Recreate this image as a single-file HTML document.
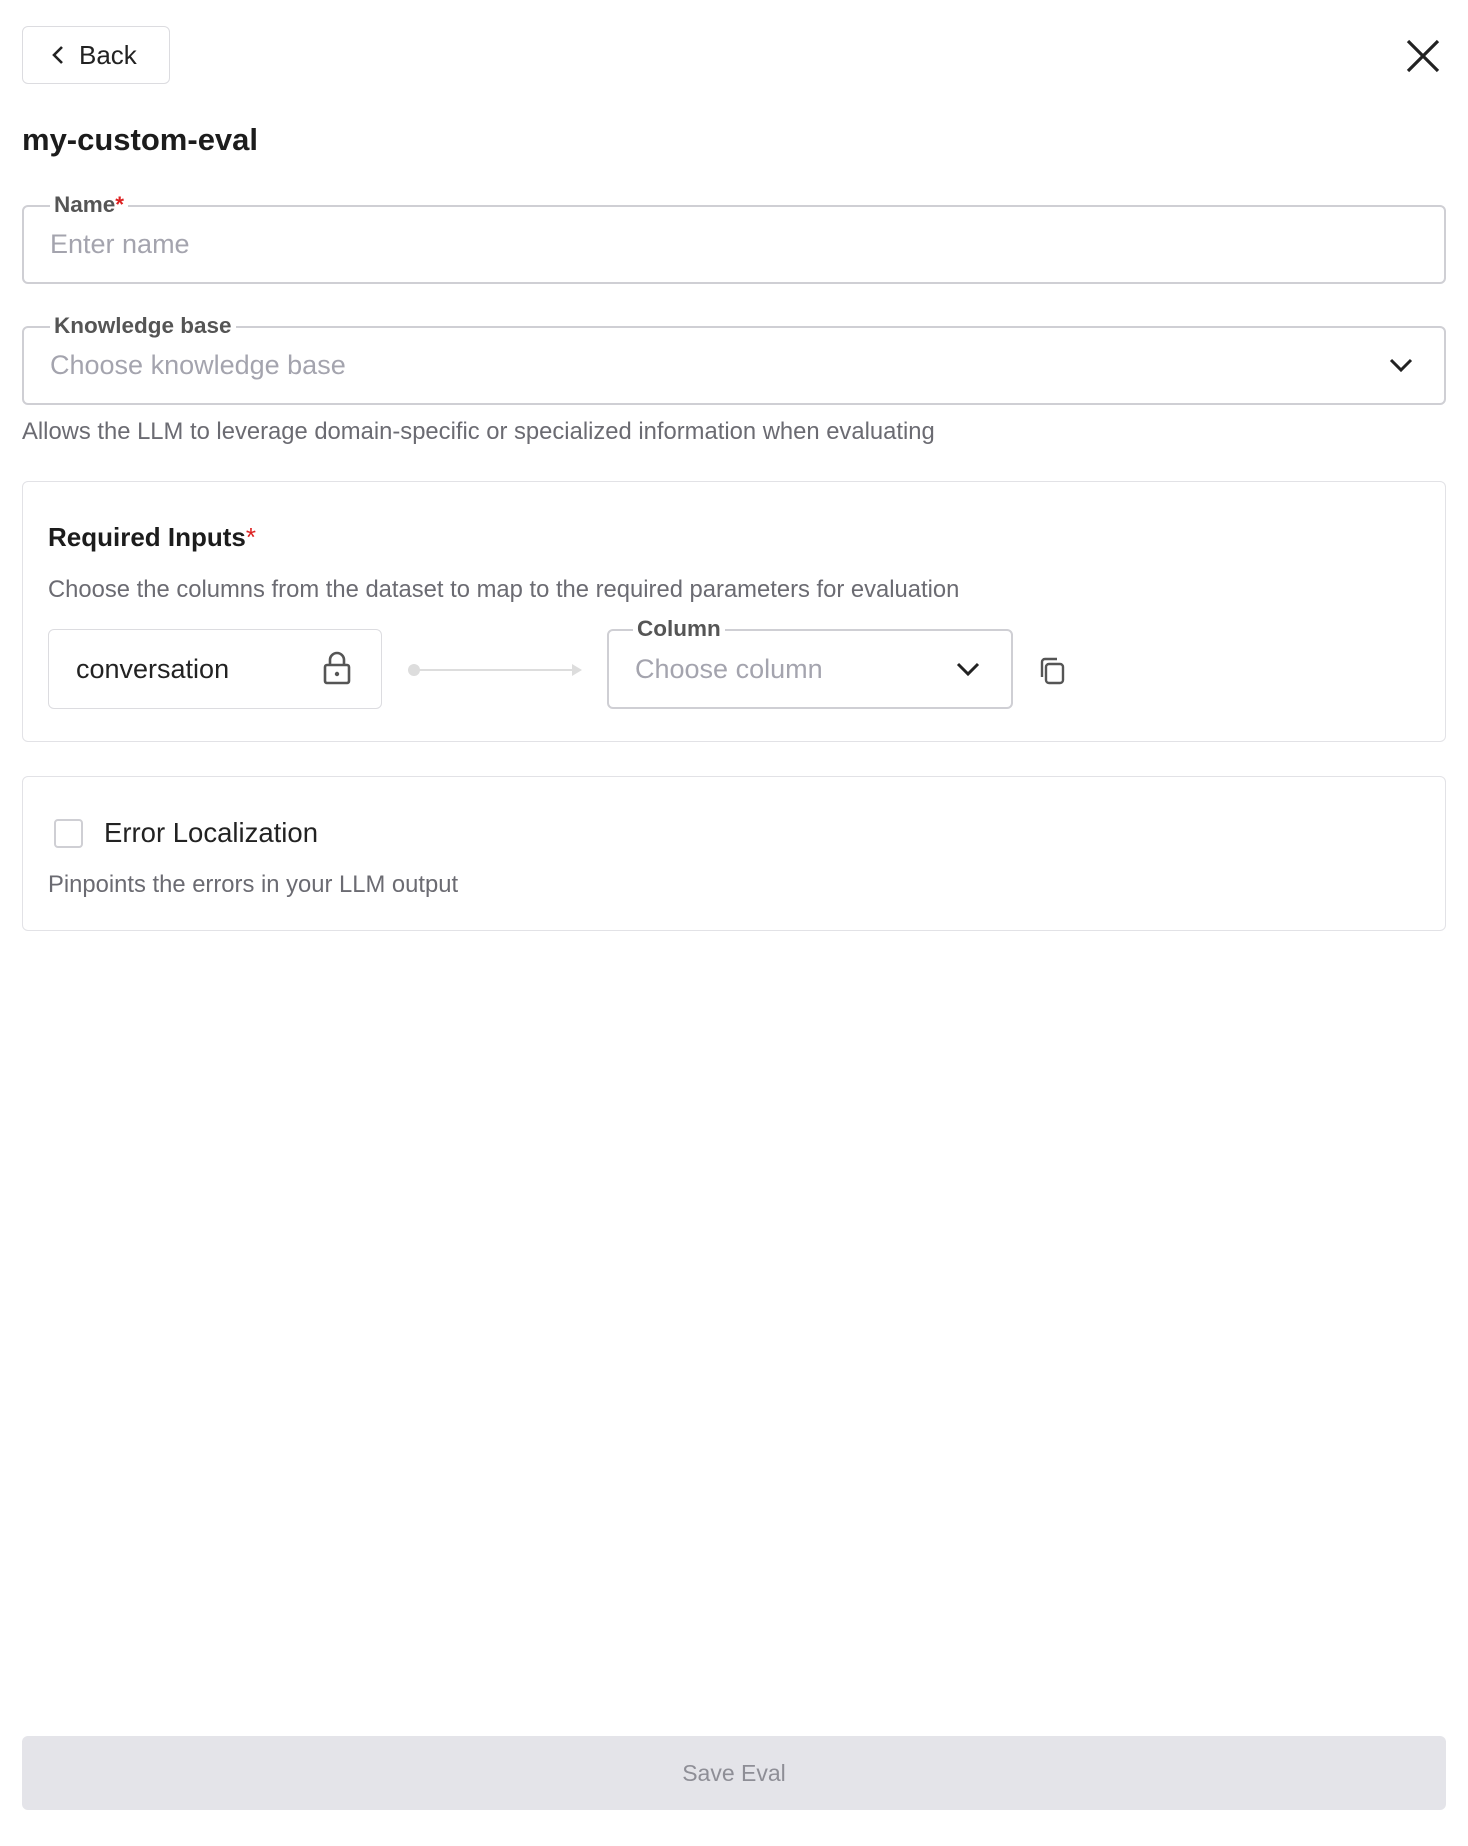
<!DOCTYPE html>
<html><head><style>
*{box-sizing:border-box;margin:0;padding:0}
body{width:1468px;height:1846px;background:#fff;font-family:"Liberation Sans",sans-serif;color:#1a1a1a;position:relative;overflow:hidden}
.abs{position:absolute}
.back{left:22px;top:26px;width:148px;height:58px;border:1.5px solid #dcdce0;border-radius:6px;font-size:26px;display:flex;align-items:center;padding-left:28px;gap:14px;color:#222}
.field{border:2px solid #cfcfd4;border-radius:6px}
.lbl{position:absolute;top:-15px;background:#fff;padding:0 4px;font-size:22.5px;font-weight:bold;color:#555}
.ph{position:absolute;font-size:27px;color:#a4a4ae}
.help{font-size:23.8px;color:#6b6b72}
.card{border:1.5px solid #e2e2e6;border-radius:6px}
</style></head><body>
<div class="abs back"><svg width="14" height="22" viewBox="0 0 14 22"><path d="M11 3 L3 11 L11 19" fill="none" stroke="#222" stroke-width="2.6"/></svg>Back</div>
<svg class="abs" style="left:1405px;top:38px" width="36" height="36" viewBox="0 0 36 36"><path d="M3 3L33 33M33 3L3 33" stroke="#222" stroke-width="3.2"/></svg>
<div class="abs" style="left:22px;top:122px;font-size:31px;font-weight:bold;color:#1c1c1c">my-custom-eval</div>

<div class="abs field" style="left:22px;top:205px;width:1424px;height:79px">
<div class="lbl" style="left:26px">Name<span style="color:#d22">*</span></div>
<div class="ph" style="left:26px;top:22px">Enter name</div></div>

<div class="abs field" style="left:22px;top:326px;width:1424px;height:79px">
<div class="lbl" style="left:26px">Knowledge base</div>
<div class="ph" style="left:26px;top:22px">Choose knowledge base</div>
<svg class="abs" style="right:30px;top:29px" width="26" height="16" viewBox="0 0 26 16"><path d="M3 3L13 13L23 3" fill="none" stroke="#222" stroke-width="3"/></svg></div>
<div class="abs help" style="left:22px;top:418px">Allows the LLM to leverage domain-specific or specialized information when evaluating</div>

<div class="abs card" style="left:22px;top:481px;width:1424px;height:261px">
<div class="abs" style="left:25px;top:40px;font-size:26px;font-weight:bold;color:#1c1c1c">Required Inputs<span style="color:#d22;font-weight:normal">*</span></div>
<div class="abs help" style="left:25px;top:94px">Choose the columns from the dataset to map to the required parameters for evaluation</div>
<div class="abs" style="left:25px;top:147px;width:334px;height:80px;border:1.5px solid #dcdce0;border-radius:6px">
<div class="abs" style="left:27px;top:24px;font-size:27px;color:#222">conversation</div>
<svg class="abs" style="left:273px;top:20px" width="30" height="36" viewBox="0 0 30 36"><rect x="3" y="15" width="24" height="18" rx="2" fill="none" stroke="#555" stroke-width="2.6"/><path d="M8 15V10a7 7 0 0 1 14 0v5" fill="none" stroke="#555" stroke-width="2.6"/><circle cx="15" cy="24" r="2.2" fill="#555"/></svg></div>
<svg class="abs" style="left:383px;top:180px" width="180" height="16" viewBox="0 0 180 16"><circle cx="8" cy="8" r="6" fill="#ddd"/><path d="M8 8H168" stroke="#ddd" stroke-width="2"/><path d="M166 2L176 8L166 14Z" fill="#ddd"/></svg>
<div class="abs field" style="left:584px;top:147px;width:406px;height:80px">
<div class="lbl" style="left:24px">Column</div>
<div class="ph" style="left:26px;top:23px">Choose column</div>
<svg class="abs" style="right:30px;top:30px" width="26" height="16" viewBox="0 0 26 16"><path d="M3 3L13 13L23 3" fill="none" stroke="#222" stroke-width="3"/></svg></div>
<svg class="abs" style="left:1015px;top:174px" width="30" height="30" viewBox="0 0 30 30"><rect x="8" y="8" width="17" height="19" rx="3" fill="none" stroke="#555" stroke-width="2.4"/><path d="M4 21V6a3 3 0 0 1 3-3h12" fill="none" stroke="#555" stroke-width="2.4"/></svg>
</div>

<div class="abs card" style="left:22px;top:776px;width:1424px;height:155px">
<div class="abs" style="left:31px;top:42px;width:29px;height:29px;border:2px solid #cfcfd4;border-radius:4px"></div>
<div class="abs" style="left:81px;top:40px;font-size:27.5px;color:#222">Error Localization</div>
<div class="abs help" style="left:25px;top:94px">Pinpoints the errors in your LLM output</div></div>

<div class="abs" style="left:22px;top:1736px;width:1424px;height:74px;background:#e4e4e9;border-radius:6px;display:flex;align-items:center;justify-content:center;font-size:23px;color:#8e8e96">Save Eval</div>
</body></html>
